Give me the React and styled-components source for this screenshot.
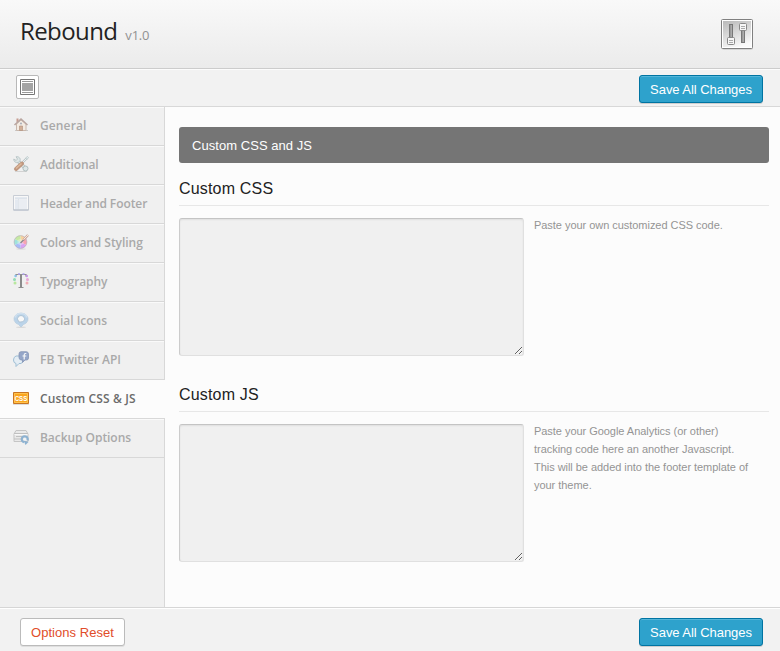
import React from "react";
import styled, { createGlobalStyle, css } from "styled-components";

const Global = createGlobalStyle`
  * { box-sizing: border-box; }
  html, body { margin: 0; padding: 0; background: #fcfcfc; overflow: hidden; }
`;

const sans = `"Liberation Sans", Arial, sans-serif`;
const open = `"Open Sans", sans-serif`;

const Panel = styled.div`
  width: 780px;
  height: 651px;
  display: flex;
  flex-direction: column;
  font-family: ${sans};
`;

const Header = styled.header`
  height: 69px;
  display: flex;
  justify-content: space-between;
  padding: 14px 27px 0 20px;
  border-bottom: 1px solid #ccc;
  background: linear-gradient(#f9f9f9, #ebebeb);
`;

const Brand = styled.div`
  display: flex;
  align-items: baseline;
  height: 34px;
  gap: 8px;
  font-family: ${open};
`;

const Title = styled.h1`
  margin: 0;
  font-size: 24px;
  font-weight: 400;
  line-height: 34px;
  letter-spacing: -0.6px;
  color: #222;
`;

const Version = styled.span`
  font-size: 13px;
  letter-spacing: -0.2px;
  color: #919191;
`;

const HeaderIcon = styled.svg`
  width: 32px;
  height: 32px;
  margin-top: 4px;
`;

const Bar = styled.div`
  display: flex;
  justify-content: space-between;
  align-items: flex-start;
  background: #f2f2f2;
`;

const Toolbar = styled(Bar)`
  height: 38px;
  padding: 6px 17px 0 16px;
  border-bottom: 1px solid #d8d8d8;
  box-shadow: inset 0 1px #fcfcfc;
`;

const Footer = styled(Bar)`
  height: 44px;
  padding: 10px 17px 0 20px;
  border-top: 1px solid #d6d6d6;
  box-shadow: inset 0 1px #fff;
`;

const Button = styled.button`
  height: 28px;
  padding: 1px 0 0;
  border-radius: 3px;
  font: 13px/25px ${sans};
  ${(p) =>
    p.$primary
      ? css`
          width: 124px;
          color: #fff;
          letter-spacing: -0.05px;
          background: #2ea2cc;
          border: 1px solid #0074a2;
          box-shadow: inset 0 1px rgba(120, 200, 230, 0.5), 0 1px rgba(0, 0, 0, 0.15);
        `
      : css`
          width: 105px;
          color: #e14d2a;
          letter-spacing: 0.05px;
          background: #fff;
          border: 1px solid #bbb;
          box-shadow: 0 1px rgba(0, 0, 0, 0.08);
        `}
`;

const ExpandButton = styled.button`
  width: 23px;
  height: 24px;
  padding: 0;
  display: grid;
  place-items: center;
  background: #fff;
  border: 1px solid #b8b8b8;
  border-radius: 2px;
`;

const Body = styled.div`
  height: 500px;
  display: flex;
`;

const Sidebar = styled.nav`
  width: 165px;
  background: #f0f0f0;
  border-right: 1px solid #d8d8d8;
`;

const NavItem = styled.a`
  height: 39px;
  width: ${(p) => (p.$active ? 165 : 164)}px;
  display: flex;
  align-items: flex-start;
  gap: 11px;
  padding: 10px 0 0 13px;
  border-bottom: 1px solid #d8d8d8;
  background: ${(p) => (p.$active ? "#fcfcfc" : "#f0f0f0")};
  box-shadow: ${(p) => (p.$active ? "none" : "inset 0 1px #fafafa")};
  color: ${(p) => (p.$active ? "#6c6c6c" : "#a9a9a9")};
  font: 600 12px/18px ${open};
  letter-spacing: ${(p) => p.$track}px;
  white-space: nowrap;

  svg {
    width: 16px;
    height: 16px;
    flex: none;
    overflow: visible;
    opacity: ${(p) => (p.$active ? 1 : 0.55)};
  }
`;

const Content = styled.main`
  flex: 1;
  padding: 20px 11px 0 14px;
  background: #fcfcfc;
`;

const SectionTitle = styled.h2`
  height: 36px;
  margin: 0;
  padding-left: 13px;
  border-radius: 3px;
  background: #757575;
  color: #fff;
  font: 13px/37px ${sans};
  letter-spacing: 0.05px;
`;

const Option = styled.section`
  height: 206px;
  padding-top: 14px;
`;

const OptionTitle = styled.h3`
  height: 29px;
  margin: 0 0 12px;
  border-bottom: 1px solid #e7e7e7;
  color: #222;
  font: 16px/23px ${sans};
  letter-spacing: 0.18px;
`;

const OptionRow = styled.div`
  display: flex;
  gap: 10px;
`;

const Code = styled.textarea`
  display: block;
  width: 345px;
  height: 138px;
  margin: 0;
  border: 1px solid #e0e0e0;
  border-top-color: #c4c4c4;
  border-left-color: #ccc;
  border-radius: 3px;
  background: #f0f0f0;
  box-shadow: inset 0 1px 2px rgba(0, 0, 0, 0.07);
  resize: both;
  outline: none;
`;

const Hint = styled.p`
  width: 225px;
  margin: -2px 0 0;
  color: #949494;
  font: 11px/18px ${sans};
  letter-spacing: -0.04px;
`;

const Home = () => (
  <svg viewBox="0 0 16 16">
    <path d="M2 13.500h13" stroke="#aaa" />
    <path d="M3.500 7 8 3l5 4v6.500h-9.500Z" fill="#f7e7d7" stroke="#a98b78" />
    <path d="M3.500 1.500h2V5h-2z" fill="#a65b45" />
    <path d="m1.500 8 6.500-6 6.500 6" fill="none" stroke="#8d6a60" strokeWidth="1.500" />
    <path d="M6.500 9h3v4.500h-3z" fill="#b97a50" stroke="#793e1c" strokeWidth=".6" />
    <circle cx="8" cy="6.500" r="1" fill="#6b788c" />
  </svg>
);

const Tools = () => (
  <svg viewBox="0 0 16 16">
    <path d="M2 15.500h12" stroke="#bbb" />
    <path d="m4.500 4.500 8 8" stroke="#7e9799" strokeWidth="3.500" />
    <path d="m4.500 4.500 8 8" stroke="#d0dfdf" strokeWidth="2" />
    <path d="M3 .8C6 0 8.500 3 6.500 5.500 4 8 .5 6 .8 3l2.400 1.500L4.500 3Z" fill="#d0dfdf" stroke="#7e9799" strokeWidth=".8" />
    <circle cx="12.500" cy="12.500" r="2.500" fill="#d0dfdf" stroke="#7e9799" />
    <path d="m8 8 5.500-5.500" stroke="#8ba0a3" strokeWidth="2.200" />
    <path d="m8 8 5-5" stroke="#e4eeee" strokeWidth="1" />
    <path d="m12.500 2 1.500 1.500 1.500-2-1-1z" fill="#d9e7e8" stroke="#8aa4a8" strokeWidth=".8" />
    <path d="m3 13 6-5.500" stroke="#9a5024" strokeWidth="4" strokeLinecap="round" />
    <path d="m3 12.500 5.500-5" stroke="#d08d58" strokeWidth="1.500" />
  </svg>
);

const Layout = () => (
  <svg viewBox="0 0 16 16">
    <path d="M.5.5h15v14.500H.5z" fill="#fff" stroke="#a9b2c0" />
    <path d="M2 2h12v2H2zM2 5h3v9H2z" fill="#dce5f0" />
    <path d="M6 5h8v9H6z" fill="#e6ecf4" />
    <path d="M5.500 4v10M2 4h12" stroke="#bac7d8" strokeWidth=".6" />
    <path d="M.5 15h15" stroke="#8190a5" />
  </svg>
);

const ColorWheel = () => (
  <svg viewBox="0 0 16 16">
    <ellipse cx="8" cy="15" rx="5" ry=".8" fill="#ccc" />
    <path d="M7.500 8V1.500A6.500 6.500 0 0 1 13.200 5Z" fill="#ffb75e" />
    <path d="M7.500 8 13.200 5a6.500 6.500 0 0 1 0 6Z" fill="#ff667e" />
    <path d="m7.500 8 5.700 3a6.500 6.500 0 0 1-5.700 3.500Z" fill="#c964f5" />
    <path d="M7.500 8v6.500A6.500 6.500 0 0 1 1.800 11Z" fill="#6d92ff" />
    <path d="m7.500 8-5.700 3a6.500 6.500 0 0 1 0-6Z" fill="#5dd9cb" />
    <path d="M7.500 8 1.800 5a6.500 6.500 0 0 1 5.700-3.500Z" fill="#a5e566" />
    <circle cx="7.500" cy="8" r="3" fill="#fff" opacity=".35" />
    <circle cx="7.500" cy="8" r="6.400" fill="none" stroke="#84768b" strokeWidth=".6" />
    <path d="m7.500 9 4-4" stroke="#2f333f" strokeWidth="1.300" />
    <path d="m10.500 6 4.500-5" stroke="#ad6b5a" strokeWidth="2.400" />
    <path d="m10.500 5.500 4.500-4.500" stroke="#ffe4c7" />
  </svg>
);

const TypeIcon = () => (
  <svg viewBox="0 0 16 16">
    <path d="M3 1.500h10M3 1v2.500M13 1v2.500M5.500 14.500h5" fill="none" stroke="#444" strokeWidth="1.200" />
    <path d="M8 1.500v13" stroke="#3a3a3a" strokeWidth="2" />
    <path d="M5 1h2M9.500 1h2" stroke="#7b67f0" strokeWidth="1.500" />
    <circle cx="2.500" cy="3" r="1.200" fill="#379dee" />
    <circle cx="1.500" cy="6.500" r="1.500" fill="#46ce82" />
    <circle cx="2" cy="10" r="1.500" fill="#8be35c" />
    <circle cx="13.800" cy="3" r="1.200" fill="#a34de5" />
    <circle cx="14.500" cy="6.500" r="1.500" fill="#e36cc4" />
    <circle cx="14" cy="10" r="1.500" fill="#f07882" />
  </svg>
);

const Pin = () => (
  <svg viewBox="0 0 16 16">
    <ellipse cx="8" cy="15.300" rx="5" ry=".7" fill="#c8c8c8" />
    <path d="M5.500 12.500A7 5.900 0 1 1 10.500 12.500L8 15Z" fill="#8fbde4" stroke="#8db2d3" strokeWidth=".8" />
    <path d="M2.500 5.500a5.500 4 0 0 1 11 0" fill="none" stroke="#b9d5ee" strokeWidth="1.500" />
    <path d="M4.500 6.500Q5 3.500 8 3.500t3.500 3T8 10H6L5.500 9Q4.500 8 4.500 6.500Z" fill="#fff" stroke="#789fc1" />
  </svg>
);

const Chat = () => (
  <svg viewBox="0 0 16 16">
    <path d="M3 5h5q2.500 1 2.500 3.500T8 12.500H6L3 15.500v-3Q.5 12 .5 9T3 5Z" fill="#dcecf8" stroke="#5e97c0" />
    <path d="M8 .7h5.500Q15.500 1 15.500 3v4q0 2-2 2H12l-2.500 2.500V9H8Q6 8.500 6 6.500V3Q6 .7 8 .7Z" fill="#4b6ba8" stroke="#314d86" strokeWidth=".8" />
    <path d="M13.300 2.500h-.8c-1 0-1.300.8-1.300 1.600V8.500M9.500 5H13.300" fill="none" stroke="#fff" strokeWidth="1.200" />
  </svg>
);

const CssLabel = styled.text`
  font: 700 8px "Liberation Sans", Arial, sans-serif;
  letter-spacing: 0;
  fill: #fff;
`;

const CssIcon = () => (
  <svg viewBox="0 0 16 16">
    <path d="M0 14.500h16" stroke="#ddd" />
    <path d="M.5 2.500h15v11H.5z" fill="#fba61f" stroke="#c87522" />
    <path d="M1.500 3.500h13v9h-13z" fill="none" stroke="#ffc34d" />
    <CssLabel x="1.700" y="10.900" textLength="12.600" lengthAdjust="spacingAndGlyphs">CSS</CssLabel>
  </svg>
);

const Backup = () => (
  <svg viewBox="0 0 16 16">
    <path d="M1 5 3 1.500h10L15 5v7.500H1Z" fill="#e4e4e4" stroke="#a2a2a2" />
    <path d="M1 4.500h14M3 7.500h6M1 10h8" stroke="#999" fill="none" />
    <path d="M1.500 5.500h13" stroke="#fff" />
    <path d="M14.500 11.500A3 3 0 1 0 11 13.200" fill="none" stroke="#3d80b8" strokeWidth="2.200" />
    <path d="m10.500 11.500 2 4.500 3-3Z" fill="#3d80b8" />
    <circle cx="11.800" cy="10.300" r="1.200" fill="#f5fafe" />
  </svg>
);

const Sliders = () => (
  <HeaderIcon viewBox="0 0 32 32">
    <defs>
      <linearGradient id="plate" x1=".2" y1="0" x2=".6" y2="1">
        <stop stopColor="#bdbdbd" />
        <stop offset="1" stopColor="#fafafa" />
      </linearGradient>
      <linearGradient id="track">
        <stop stopColor="#8a8a8a" />
        <stop offset="1" stopColor="#bcbcbc" />
      </linearGradient>
    </defs>
    <rect x="1" y="2" width="31" height="30" rx="2" fill="#d5d5d5" />
    <rect x=".5" y="1.500" width="31" height="29" rx="1" fill="#fff" stroke="#808080" />
    <rect x="2" y="3" width="28" height="26" fill="url(#plate)" />
    <rect x="8.500" y="6.500" width="3" height="14" fill="url(#track)" stroke="#777" />
    <rect x="20.500" y="11.500" width="3" height="13" fill="url(#track)" stroke="#777" />
    <rect x="6.500" y="19.500" width="7" height="7" rx="1" fill="#f6f6f6" stroke="#888" />
    <rect x="18.500" y="5.500" width="7" height="7" rx="1" fill="#f6f6f6" stroke="#888" />
    <path d="M8 22.500h4M8 24.500h4M20 8.500h4M20 10.500h4" stroke="#aaa" />
  </HeaderIcon>
);

const items = [
  ["General", Home, 0.12],
  ["Additional", Tools, -0.1],
  ["Header and Footer", Layout, -0.08],
  ["Colors and Styling", ColorWheel, -0.05],
  ["Typography", TypeIcon, -0.1],
  ["Social Icons", Pin, 0],
  ["FB Twitter API", Chat, 0],
  ["Custom CSS & JS", CssIcon, 0.12],
  ["Backup Options", Backup, -0.05],
];

export default function App() {
  return (
    <Panel>
      <Global />
      <Header>
        <Brand>
          <Title>Rebound</Title>
          <Version>v1.0</Version>
        </Brand>
        <Sliders />
      </Header>
      <Toolbar>
        <ExpandButton aria-label="Expand options">
          <svg width="15" height="16" viewBox="0 0 15 16">
            <path d="M.5.500h14v15H.5z" fill="#fff" stroke="#777" />
            <path d="M2 2.500h11M2 13.500h11" stroke="#999" />
            <path d="M2 4h11v8H2z" fill="#a4a4a4" />
          </svg>
        </ExpandButton>
        <Button $primary>Save All Changes</Button>
      </Toolbar>
      <Body>
        <Sidebar>
          {items.map(([label, Icon, track]) => (
            <NavItem key={label} $active={label === "Custom CSS & JS"} $track={track}>
              <Icon />
              {label}
            </NavItem>
          ))}
        </Sidebar>
        <Content>
          <SectionTitle>Custom CSS and JS</SectionTitle>
          <Option>
            <OptionTitle>Custom CSS</OptionTitle>
            <OptionRow>
              <Code aria-label="Custom CSS" />
              <Hint>Paste your own customized CSS code.</Hint>
            </OptionRow>
          </Option>
          <Option>
            <OptionTitle>Custom JS</OptionTitle>
            <OptionRow>
              <Code aria-label="Custom JS" />
              <Hint>
                Paste your Google Analytics (or other)
                <br />
                tracking code here an another Javascript.
                <br />
                This will be added into the footer template of
                <br />
                your theme.
              </Hint>
            </OptionRow>
          </Option>
        </Content>
      </Body>
      <Footer>
        <Button>Options Reset</Button>
        <Button $primary>Save All Changes</Button>
      </Footer>
    </Panel>
  );
}
